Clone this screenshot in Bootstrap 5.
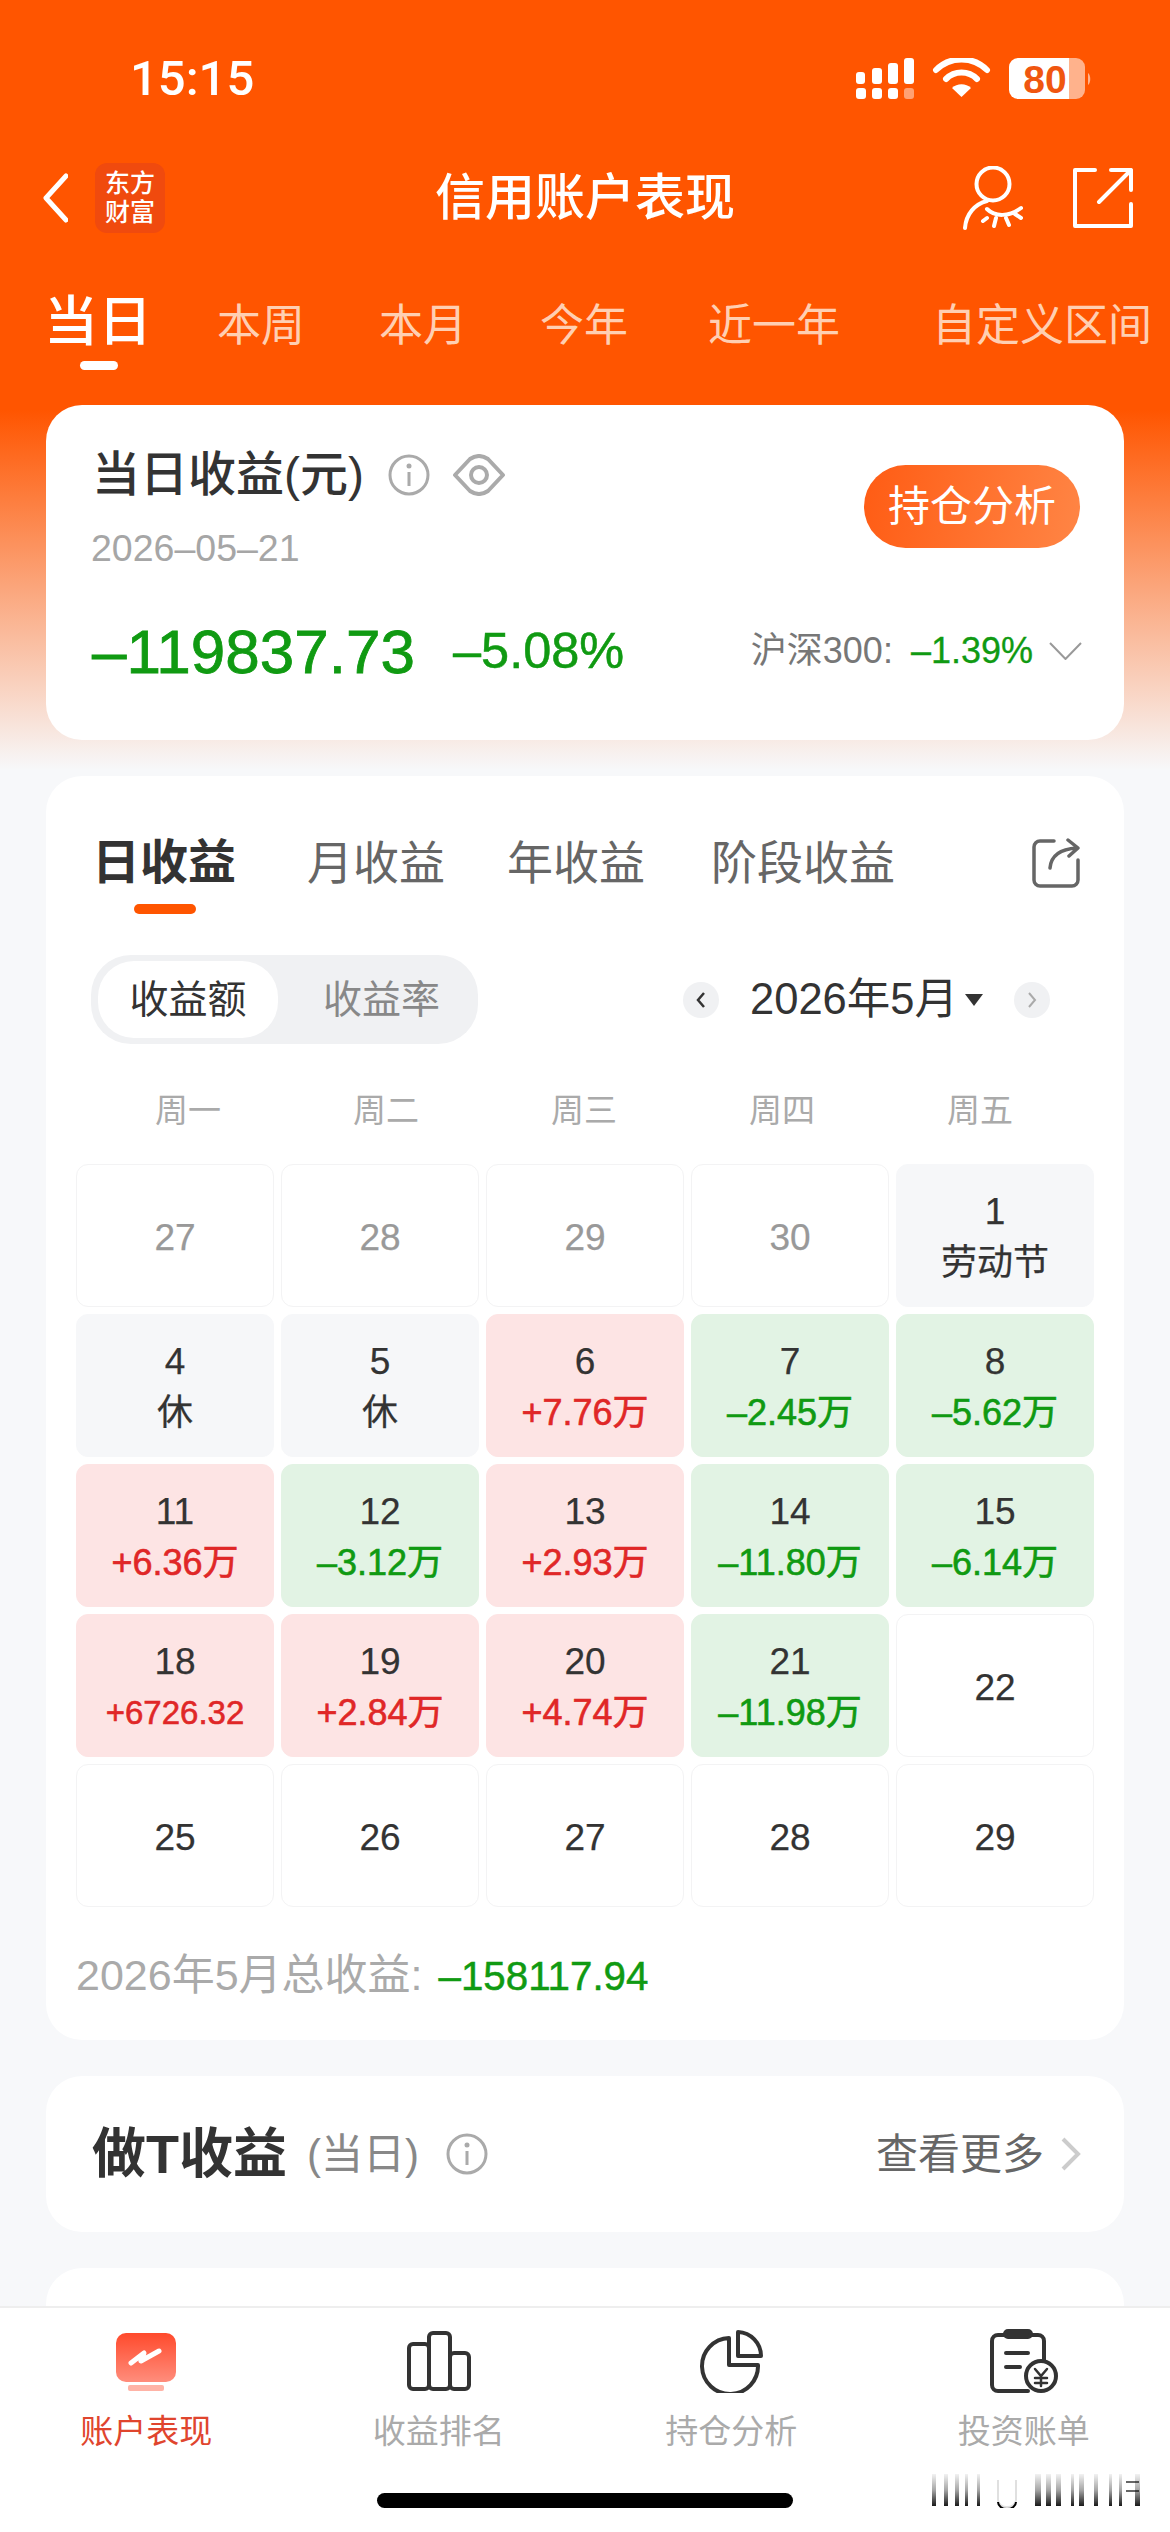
<!DOCTYPE html>
<html lang="zh-CN">
<head>
  <meta charset="UTF-8">
  <meta name="viewport" content="width=device-width, initial-scale=1.0">
  <title>信用账户表现</title>
  <link href="https://cdn.jsdelivr.net/npm/bootstrap@5.3.5/dist/css/bootstrap.min.css" rel="stylesheet">
  <style>
    body { margin: 0; background: #f7f8fa; font-family: "Liberation Sans", "Noto Sans CJK SC", sans-serif; color: #333; }
    .phone { width: 1170px; height: 2532px; overflow: hidden; position: relative; }
    .scroll-area { background: linear-gradient(#ff5500 0, #ff5500 410px, #f7f8fa 770px); min-height: 0; }

    .status-row { height: 157px; padding: 0 78px 0 130px; color: #fff; }
    .status-time { font-family: Roboto, "Liberation Sans", sans-serif; font-weight: 500; font-size: 49px; line-height: 1; }

    .nav-row { height: 82px; padding: 0 37px 0 43px; color: #fff; }
    .app-logo { width: 70px; height: 70px; margin-left: 27px; background: #f04a0e; border-radius: 12px; font-size: 25px; line-height: 29px; font-weight: 500; text-align: center; padding-top: 6px; }
    .nav-title { left: 0; right: 0; text-align: center; font-size: 50px; font-weight: 500; line-height: 82px; }
    .nav-icons { gap: 50px; }

    .period-row { height: 166px; padding: 53px 0 0 44px; color: #ffcfb2; font-size: 44px; white-space: nowrap; }
    .period-tab { position: relative; margin-left: 80px; line-height: 60px; }
    .period-tab:nth-child(2) { margin-left: 65px; }
    .period-tab:nth-child(3) { margin-left: 74px; }
    .period-tab:nth-child(4) { margin-left: 73px; }
    .period-tab:nth-child(6) { margin-left: 92px; }
    .period-tab.on { margin-left: 0; color: #fff; font-size: 54px; font-weight: 500; }
    .period-tab.on::after { content: ""; position: absolute; left: 36px; top: 69px; width: 38px; height: 9px; background: #fff; border-radius: 5px; }

    .panel { margin: 0 46px 36px; background: #fff; border: 0; border-radius: 36px; }
    .panel-summary { height: 335px; padding: 0 42px 0 46px; }
    .sum-top { padding-top: 49px; }
    .sum-title { font-size: 48px; font-weight: 500; line-height: 42px; }
    .sum-date { font-size: 37.500px; color: #a6a6a6; line-height: 40px; margin-top: 32px; margin-left: -1px; }
    .hold-btn { width: 216px; height: 83px; margin: 11px 2px 0 0; padding: 0; border: 0; border-radius: 42px; color: #fff; font-size: 42px; line-height: 83px; background: linear-gradient(100deg, #ff5c14, #ff8545); }
    .info-gap { margin-left: 24px; }
    .eye-gap { margin-left: 22px; }
    .sum-bottom { margin-top: 48px; height: 70px; }
    .up-green { color: #109a12; }
    .big-num { font-size: 62px; -webkit-text-stroke: 0.8px #109a12; }
    .big-pct { font-size: 50.500px; margin-left: 38px; -webkit-text-stroke: 0.5px #109a12; }
    .index-name { font-size: 36px; color: #777; }
    .index-pct { font-size: 36px; margin-left: 18px; -webkit-text-stroke: 0.3px #109a12; }

    .panel-calendar { height: 1264px; padding-top: 59px; }
    .cal-tabs { padding: 0 44px 0 46px; height: 56px; font-size: 46px; color: #666; }
    .cal-tab { position: relative; margin-left: 66px; white-space: nowrap; line-height: 56px; }
    .cal-tab:nth-child(2) { margin-left: 71px; }
    .cal-tab:nth-child(3) { margin-left: 62px; }
    .cal-tab.on { margin-left: 0; font-size: 48px; font-weight: 700; color: #333; }
    .cal-tab.on::after { content: ""; position: absolute; left: 42px; top: 69px; width: 62px; height: 10px; background: #ff5500; border-radius: 5px; }

    .cal-tools { padding: 0 74px 0 45px; margin-top: 64px; height: 89px; }
    .seg-box { width: 387px; height: 89px; padding: 6px 7px; background: #f0f1f3; border-radius: 40px; font-size: 39px; color: #888; }
    .seg-item { width: 180px; height: 77px; line-height: 77px; text-align: center; border-radius: 36px; }
    .seg-item.on { background: #fff; color: #333; }
    .seg-item.off { width: 193px; padding-left: 14px; }
    .month-arrow { width: 36px; height: 36px; border-radius: 50%; background: #f0f1f3; }
    .month-text { font-size: 43.500px; color: #333; margin: 0 7px 0 31px; white-space: nowrap; }
    .month-caret { width: 0; height: 0; border-left: 9px solid transparent; border-right: 9px solid transparent; border-top: 12px solid #333; margin-right: 31px; }

    .week-row { margin: 44px 45px 0 43px; height: 46px; font-size: 33px; line-height: 46px; color: #aaa; text-align: center; }
    .day-grid { display: grid; grid-template-columns: repeat(5, 198px); grid-auto-rows: 143px; gap: 7px; margin: 30px 30px 0; }
    .day-cell { border-radius: 12px; border: 1.500px solid #f3f3f4; font-size: 37px; line-height: 51px; text-align: center; color: #333; padding-top: 3px; -webkit-text-stroke: 0.25px currentColor; }
    .day-cell.past { color: #999; }
    .day-cell.rest { background: #f6f7f9; border-color: #f6f7f9; }
    .day-cell.gain { background: #fde4e4; border-color: #fde4e4; }
    .day-cell.loss { background: #e2f3e4; border-color: #e2f3e4; }
    .day-val { font-size: 36px; }
    .gain .day-val { color: #e02727; -webkit-text-stroke: 0.6px #e02727; }
    .loss .day-val { color: #109a12; -webkit-text-stroke: 0.6px #109a12; }
    .day-val.tiny { font-size: 33px; }

    .cal-total { margin: 43px 0 0 30px; font-size: 43px; line-height: 50px; color: #aaa; white-space: nowrap; }
    .cal-total span { font-size: 40.300px; margin-left: 16px; -webkit-text-stroke: 0.5px #109a12; }

    .panel-t { height: 156px; padding: 0 42px 0 46px; }
    .t-name { font-size: 54px; font-weight: 700; }
    .t-when { font-size: 42px; color: #888; margin-left: 20px; }
    .t-more { font-size: 42px; color: #666; }
    .t-info { margin-left: 27px; }
    .panel-next { height: 200px; margin-bottom: 0; }

    .tab-bar { height: 226px; background: #fff; border-top: 2px solid #eeeeee; flex-shrink: 0; position: relative; }
    .tab-item { padding-top: 21px; text-align: center; font-size: 33px; color: #aaa; line-height: 40px; }
    .tab-item.on { color: #e0452e; }
    .tab-item svg { display: block; margin: 0 auto 19px; }
    .home-line { position: absolute; left: 377px; top: 185px; width: 416px; height: 15px; padding: 0; border-radius: 8px; background: #000; }
    .mark-img { position: absolute; left: 931px; top: 164px; width: 210px; height: 36px; padding: 0; }
  </style>
</head>
<body>
  <div class="phone d-flex flex-column">
    <div class="scroll-area flex-grow-1 overflow-hidden">

      <!-- Status bar -->
      <div class="status-row d-flex justify-content-between align-items-center">
        <div class="status-time">15:15</div>
        <svg width="236" height="42" viewBox="0 0 236 42">
          <g fill="#fff">
            <rect x="0" y="14" width="9" height="12" rx="3"/><rect x="16" y="10" width="10" height="16" rx="3"/>
            <rect x="32" y="5" width="10" height="21" rx="3"/><rect x="48" y="0" width="10" height="26" rx="3"/>
            <rect x="0" y="30" width="10" height="11" rx="3"/><rect x="16" y="30" width="10" height="11" rx="3"/>
            <rect x="32" y="30" width="10" height="11" rx="3"/><rect x="48" y="30" width="10" height="11" rx="3" opacity=".45"/>
            <path d="M80 12 A36 36 0 0 1 131 12" fill="none" stroke="#fff" stroke-width="6" stroke-linecap="round"/>
            <path d="M90 21 A22 22 0 0 1 121 21" fill="none" stroke="#fff" stroke-width="6" stroke-linecap="round"/>
            <path d="M96 30 L105.500 39 L115 30 A14 14 0 0 0 96 30 Z"/>
            <path d="M162 0 H213 V41 H162 A9 9 0 0 1 153 32 V9 A9 9 0 0 1 162 0 Z"/>
            <path d="M213 0 H220 A9 9 0 0 1 229 9 V32 A9 9 0 0 1 220 41 H213 Z" opacity=".55"/>
            <path d="M232 15 C235 17 235 25 232 27 Z" opacity=".55"/>
          </g>
          <text x="189" y="35" text-anchor="middle" font-family="Liberation Sans, sans-serif" font-weight="700" font-size="39" fill="#f0560f">80</text>
        </svg>
      </div>

      <!-- Title bar -->
      <div class="nav-row d-flex justify-content-between align-items-center position-relative">
        <div class="nav-title position-absolute">信用账户表现</div>
        <div class="d-flex align-items-center position-relative">
          <svg width="25" height="50" viewBox="0 0 25 50"><path d="M23 3 L3 25 L23 47" fill="none" stroke="#fff" stroke-width="5" stroke-linecap="round" stroke-linejoin="round"/></svg>
          <div class="app-logo">东方<br>财富</div>
        </div>
        <div class="nav-icons d-flex align-items-center position-relative">
          <svg width="60" height="64" viewBox="0 0 60 64" fill="none" stroke="#fff" stroke-width="4" stroke-linecap="round">
            <circle cx="30" cy="18" r="16.500"/>
            <path d="M24 35 C12 38 3 48 2 62"/>
            <path d="M24 43 C32 51 46 51 58 42"/>
            <path d="M24 52 L20 55 M33 52 L31 60 M43 52 L46 59 M52 48 L58 52"/>
          </svg>
          <svg width="60" height="60" viewBox="0 0 60 60" fill="none" stroke="#fff" stroke-width="4" stroke-linecap="round" stroke-linejoin="round">
            <path d="M22 2 H2 V58 H58 V36"/>
            <path d="M26 34 L58 2 M38 2 H58 V22"/>
          </svg>
        </div>
      </div>

      <!-- Period tabs -->
      <div class="period-row d-flex align-items-baseline">
        <div class="period-tab on">当日</div>
        <div class="period-tab">本周</div>
        <div class="period-tab">本月</div>
        <div class="period-tab">今年</div>
        <div class="period-tab">近一年</div>
        <div class="period-tab">自定义区间</div>
      </div>

      <!-- Daily summary -->
      <div class="card panel panel-summary">
        <div class="sum-top d-flex justify-content-between">
          <div>
            <div class="d-flex align-items-center">
              <div class="sum-title">当日收益(元)</div>
              <svg class="info-gap" width="42" height="42" viewBox="0 0 42 42"><circle cx="21" cy="21" r="19" fill="none" stroke="#aaa" stroke-width="3"/><circle cx="21" cy="12" r="2.500" fill="#aaa"/><rect x="19.500" y="18" width="3" height="14" fill="#aaa"/></svg>
              <svg class="eye-gap" width="54" height="42" viewBox="0 0 54 42" fill="none" stroke="#aaa" stroke-width="4"><path d="M3 21 L18 5 C24 1 30 1 36 5 L51 21 L36 37 C30 41 24 41 18 37 Z" stroke-linejoin="round"/><circle cx="27" cy="21" r="8"/></svg>
            </div>
            <div class="sum-date">2026–05–21</div>
          </div>
          <button class="btn hold-btn" type="button">持仓分析</button>
        </div>
        <div class="sum-bottom d-flex align-items-center">
          <div class="big-num up-green">–119837.73</div>
          <div class="big-pct up-green">–5.08%</div>
          <div class="index-name ms-auto">沪深300:</div>
          <div class="index-pct up-green">–1.39%</div>
          <svg class="ms-3" width="33" height="18" viewBox="0 0 33 18"><path d="M1 1 L16.500 17 L32 1" fill="none" stroke="#999" stroke-width="2"/></svg>
        </div>
      </div>

      <!-- Calendar -->
      <div class="card panel panel-calendar">
        <div class="cal-tabs d-flex align-items-center">
          <div class="cal-tab on">日收益</div>
          <div class="cal-tab">月收益</div>
          <div class="cal-tab">年收益</div>
          <div class="cal-tab">阶段收益</div>
          <svg class="ms-auto" width="48" height="50" viewBox="0 0 48 50" fill="none" stroke="#666" stroke-width="3.500" stroke-linecap="round" stroke-linejoin="round">
            <path d="M22 3 H8 A6 6 0 0 0 2 9 V42 A6 6 0 0 0 8 48 H40 A6 6 0 0 0 46 42 V22"/>
            <path d="M18 30 C19 18 28 11 45 10 M36 2 L46 10 L37 18"/>
          </svg>
        </div>
        <div class="cal-tools d-flex align-items-center">
          <div class="seg-box d-flex">
            <div class="seg-item on">收益额</div>
            <div class="seg-item off">收益率</div>
          </div>
          <div class="ms-auto d-flex align-items-center">
            <div class="month-arrow d-flex align-items-center justify-content-center">
              <svg width="12" height="18" viewBox="0 0 12 18"><path d="M9 2 L3 9 L9 16" fill="none" stroke="#333" stroke-width="2.500"/></svg>
            </div>
            <div class="month-text">2026年5月</div>
            <div class="month-caret"></div>
            <div class="month-arrow d-flex align-items-center justify-content-center">
              <svg width="12" height="18" viewBox="0 0 12 18"><path d="M3 2 L9 9 L3 16" fill="none" stroke="#aaa" stroke-width="2"/></svg>
            </div>
          </div>
        </div>
        <div class="week-row row g-0">
          <div class="col">周一</div><div class="col">周二</div><div class="col">周三</div><div class="col">周四</div><div class="col">周五</div>
        </div>
        <div class="day-grid" id="dayGrid"></div>
        <div class="cal-total">2026年5月总收益:<span class="up-green">–158117.94</span></div>
      </div>

      <!-- Day trading -->
      <div class="card panel panel-t d-flex flex-row align-items-center">
        <div class="t-name">做T收益</div>
        <div class="t-when">(当日)</div>
        <svg class="t-info" width="42" height="42" viewBox="0 0 42 42"><circle cx="21" cy="21" r="19" fill="none" stroke="#aaa" stroke-width="3"/><circle cx="21" cy="12" r="2.500" fill="#aaa"/><rect x="19.500" y="18" width="3" height="14" fill="#aaa"/></svg>
        <div class="t-more ms-auto">查看更多</div>
        <svg class="ms-3" width="22" height="34" viewBox="0 0 22 34"><path d="M3 2 L18 17 L3 32" fill="none" stroke="#ccc" stroke-width="4"/></svg>
      </div>
      <div class="card panel panel-next"></div>
    </div>

    <!-- Bottom tabs -->
    <div class="tab-bar row g-0">
      <div class="col-3 tab-item on">
        <svg width="64" height="64" viewBox="0 0 64 64">
          <defs><linearGradient id="tabRed" x1="0" y1="0" x2="0" y2="1"><stop offset="0" stop-color="#ff4a2c"/><stop offset="1" stop-color="#ff8d7c"/></linearGradient></defs>
          <rect x="2" y="4" width="60" height="49" rx="10" fill="url(#tabRed)"/>
          <rect x="14" y="56" width="36" height="6" rx="2" fill="#ffb3a6"/>
          <path d="M17 34 L30 24 L27 32 L45 22" fill="none" stroke="#fff" stroke-width="5" stroke-linecap="round" stroke-linejoin="round"/>
        </svg>
        账户表现
      </div>
      <div class="col-3 tab-item">
        <svg width="64" height="64" viewBox="0 0 64 64" fill="none" stroke="#333" stroke-width="4" stroke-linejoin="round">
          <rect x="2" y="15" width="20" height="45" rx="4"/>
          <rect x="22" y="4" width="21" height="56" rx="4"/>
          <rect x="43" y="24" width="19" height="36" rx="4"/>
        </svg>
        收益排名
      </div>
      <div class="col-3 tab-item">
        <svg width="64" height="64" viewBox="0 0 64 64" fill="none" stroke="#333" stroke-width="4" stroke-linejoin="round">
          <path d="M30 9 A28 28 0 1 0 59 36 H30 Z"/>
          <path d="M39 3 A24 24 0 0 1 62 27 H39 Z"/>
        </svg>
        持仓分析
      </div>
      <div class="col-3 tab-item">
        <svg width="68" height="64" viewBox="0 0 68 64" fill="none" stroke="#333" stroke-width="4" stroke-linecap="round">
          <path d="M14 6 H8 A6 6 0 0 0 2 12 V56 A6 6 0 0 0 8 62 H38 M54 32 V12 A6 6 0 0 0 48 6 H40"/>
          <rect x="15" y="2" width="26" height="6" rx="3" fill="#333"/>
          <path d="M16 24 H38 M16 38 H30"/>
          <circle cx="51" cy="47" r="15"/>
          <path d="M45 40 L51 47 L57 40 M51 47 V57 M45 49 H57 M45 54 H57" stroke-width="2.500"/>
        </svg>
        投资账单
      </div>
      <div class="home-line"></div>
      <svg class="mark-img" viewBox="0 0 210 36">
        <defs><linearGradient id="fadeUp" x1="0" y1="0" x2="0" y2="1"><stop offset="0" stop-color="#000" stop-opacity=".05"/><stop offset=".5" stop-color="#000" stop-opacity=".35"/><stop offset="1" stop-color="#000" stop-opacity=".9"/></linearGradient></defs>
        <g fill="url(#fadeUp)">
          <rect x="1" y="2" width="4" height="32"/><rect x="13" y="2" width="4" height="32"/><rect x="24" y="2" width="4" height="32"/>
          <rect x="34" y="2" width="3" height="32"/><rect x="46" y="2" width="3" height="32"/>
          <rect x="104" y="2" width="6" height="32"/><rect x="115" y="2" width="5" height="32"/><rect x="125" y="2" width="5" height="32"/>
          <rect x="140" y="2" width="3" height="32"/><rect x="148" y="2" width="5" height="32"/><rect x="163" y="2" width="4" height="32"/>
          <rect x="178" y="2" width="3" height="32"/><rect x="188" y="2" width="3" height="32"/><rect x="204" y="2" width="5" height="32"/>
        </g>
        <path d="M67 8 V28 A9 7 0 0 0 85 28 V8" fill="none" stroke="#000" stroke-opacity=".12" stroke-width="2"/>
        <path d="M67 30 A9 7 0 0 0 85 30" fill="none" stroke="#000" stroke-width="2"/>
        <path d="M195 10 H208 M195 19 H208" stroke="#000" stroke-opacity=".6" stroke-width="2"/>
      </svg>
    </div>
  </div>

  <script src="https://cdn.jsdelivr.net/npm/bootstrap@5.3.5/dist/js/bootstrap.bundle.min.js"></script>
  <script>
    // Calendar cells: day, kind, second line
    const days = [
      ['27', 'past'], ['28', 'past'], ['29', 'past'], ['30', 'past'], ['1', 'rest', '劳动节'],
      ['4', 'rest', '休'], ['5', 'rest', '休'], ['6', 'gain', '+7.76万'], ['7', 'loss', '–2.45万'], ['8', 'loss', '–5.62万'],
      ['11', 'gain', '+6.36万'], ['12', 'loss', '–3.12万'], ['13', 'gain', '+2.93万'], ['14', 'loss', '–11.80万'], ['15', 'loss', '–6.14万'],
      ['18', 'gain', '+6726.32'], ['19', 'gain', '+2.84万'], ['20', 'gain', '+4.74万'], ['21', 'loss', '–11.98万'], ['22', ''],
      ['25', ''], ['26', ''], ['27', ''], ['28', ''], ['29', '']
    ];

    const dayGrid = document.getElementById('dayGrid');
    days.forEach(([num, kind, val]) => {
      const cell = document.createElement('div');
      cell.className = 'day-cell d-flex flex-column justify-content-center ' + kind;
      cell.innerHTML = '<div>' + num + '</div>';
      if (val) {
        const line = document.createElement('div');
        line.className = 'day-val' + (val.length > 7 ? ' tiny' : '');
        line.textContent = val;
        cell.appendChild(line);
      }
      dayGrid.appendChild(cell);
    });
  </script>
</body>
</html>
